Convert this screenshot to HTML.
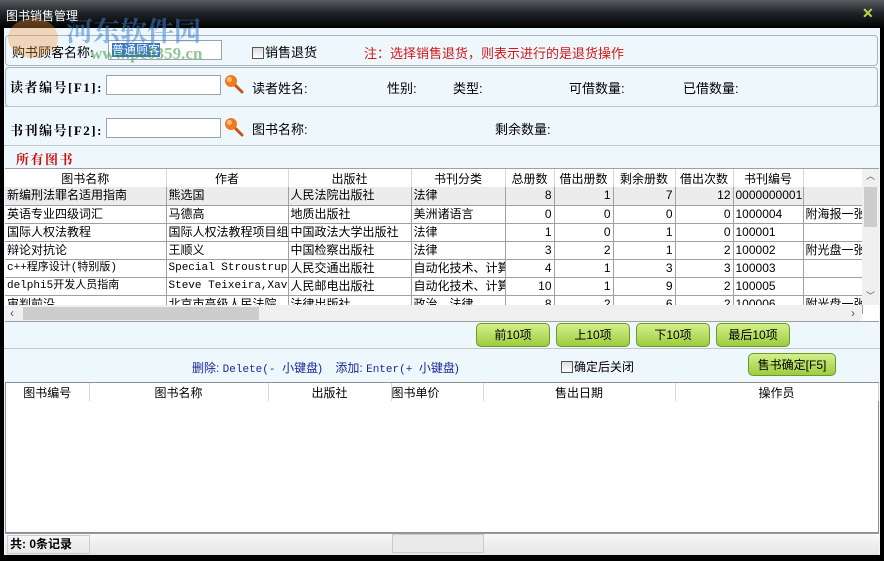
<!DOCTYPE html>
<html><head><meta charset="utf-8"><style>
*{margin:0;padding:0;box-sizing:border-box}
body{width:884px;height:561px;background:#000;font-family:"Liberation Sans","Noto Sans CJK SC",sans-serif;font-size:12px;color:#000;position:relative;overflow:hidden}
.a{position:absolute;white-space:nowrap}
#win{position:absolute;left:4px;top:28px;width:876px;height:527px;background:#eef7fc}
.title{left:0;top:0;width:884px;height:28px;background:linear-gradient(#5a5e62,#22262a 45%,#000)}
.panel{position:absolute;border:1px solid #a9b4bd;border-radius:4px}
.inp{position:absolute;background:#fff;border:1px solid #9aa4ad;height:20px}
.mag{position:absolute;width:22px;height:22px}
.lbl{font-size:13px}
.hdr{font-family:"Liberation Serif","Noto Serif CJK SC",serif;font-size:13px;letter-spacing:1.5px;font-weight:bold}
table{border-collapse:collapse;position:absolute;table-layout:fixed}
td{border-right:1px solid #a0a0a0;border-bottom:1px solid #a0a0a0;height:18px;padding:0 2px;overflow:hidden;white-space:nowrap;font-size:12px;line-height:17px}
th{font-weight:normal;border-right:1px solid #d8d8d8;height:18px;font-size:12px;background:#fff}
.r{text-align:right}
.m{font-family:"Liberation Mono","Noto Sans CJK SC",monospace;font-size:11px}
.btn{position:absolute;height:24px;border:1px solid #6a9a2a;border-radius:5px;background:linear-gradient(#d4f08a,#9ccc3e);text-align:center;line-height:22px;font-size:12px}
.cb{display:inline-block;width:12px;height:12px;border:1px solid #555;background:linear-gradient(#ddd,#fff);vertical-align:-2px;margin-right:1px}
</style></head><body>
<div class="a title"></div>
<div class="a" style="left:6px;top:7px;color:#fff;font-size:12px">图书销售管理</div>
<div class="a" style="left:862px;top:5px;color:#b8d84a;font-weight:bold;font-size:14px">✕</div>
<div id="win">
 <div class="panel" style="left:1px;top:7px;width:873px;height:31px"></div>
 <div class="panel" style="left:1px;top:39px;width:873px;height:40px"></div>
 <div class="a" style="left:0;top:78px;width:876px;border-top:1px solid #c0c8ce"></div>
 <div class="a" style="left:0;top:117px;width:876px;border-top:1px solid #c0c8ce"></div>
 <div class="a lbl" style="left:8px;top:14px">购书顾客名称:</div>
 <div class="inp" style="left:104px;top:12px;width:114px"><span style="background:#3a78c8;color:#fff;margin-left:3px;font-size:12px">普通顾客</span></div>
 <div class="a lbl" style="left:248px;top:14px"><span class="cb"></span>销售退货</div>
 <div class="a lbl" style="left:360px;top:15px;color:#d01818">注：选择销售退货，则表示进行的是退货操作</div>
 <div class="a hdr" style="left:6px;top:49px">读者编号[F1]:</div>
 <div class="inp" style="left:102px;top:47px;width:115px"></div>
 <svg class="mag" style="left:219px;top:45px" viewBox="0 0 22 22"><line x1="10" y1="10" x2="19" y2="19" stroke="#c0561a" stroke-width="3" stroke-linecap="round"/><circle cx="8" cy="8" r="6" fill="#f07a20"/><circle cx="6.5" cy="6.5" r="2.5" fill="#fbc08a"/></svg>
 <div class="a lbl" style="left:248px;top:50px">读者姓名:</div>
 <div class="a lbl" style="left:383px;top:50px">性别:</div>
 <div class="a lbl" style="left:449px;top:50px">类型:</div>
 <div class="a lbl" style="left:565px;top:50px">可借数量:</div>
 <div class="a lbl" style="left:679px;top:50px">已借数量:</div>
 <div class="a hdr" style="left:6px;top:92px">书刊编号[F2]:</div>
 <div class="inp" style="left:102px;top:90px;width:115px"></div>
 <svg class="mag" style="left:219px;top:88px" viewBox="0 0 22 22"><line x1="10" y1="10" x2="19" y2="19" stroke="#c0561a" stroke-width="3" stroke-linecap="round"/><circle cx="8" cy="8" r="6" fill="#f07a20"/><circle cx="6.5" cy="6.5" r="2.5" fill="#fbc08a"/></svg>
 <div class="a lbl" style="left:248px;top:91px">图书名称:</div>
 <div class="a lbl" style="left:491px;top:91px">剩余数量:</div>
 <div class="a hdr" style="left:12px;top:121px;color:#c81010;font-size:13px">所有图书</div>
 <div class="a" style="left:1px;top:140px;width:874px;height:154px;background:#fff;border-top:1px solid #a0a0a0;border-bottom:1px solid #a0a0a0;overflow:hidden">
 <table style="left:0;top:0;width:857px">
 <colgroup><col style="width:161px"><col style="width:122px"><col style="width:123px"><col style="width:94px"><col style="width:49px"><col style="width:59px"><col style="width:62px"><col style="width:58px"><col style="width:70px"><col style="width:59px"></colgroup>
 <tr><th>图书名称</th><th>作者</th><th>出版社</th><th>书刊分类</th><th>总册数</th><th>借出册数</th><th>剩余册数</th><th>借出次数</th><th>书刊编号</th><th></th></tr>
 <tr style="background:#ececec"><td>新编刑法罪名适用指南</td><td>熊选国</td><td>人民法院出版社</td><td>法律</td><td class="r">8</td><td class="r">1</td><td class="r">7</td><td class="r">12</td><td>0000000001</td><td></td></tr>
 <tr><td>英语专业四级词汇</td><td>马德高</td><td>地质出版社</td><td>美洲诸语言</td><td class="r">0</td><td class="r">0</td><td class="r">0</td><td class="r">0</td><td>1000004</td><td>附海报一张</td></tr>
 <tr><td>国际人权法教程</td><td>国际人权法教程项目组</td><td>中国政法大学出版社</td><td>法律</td><td class="r">1</td><td class="r">0</td><td class="r">1</td><td class="r">0</td><td>100001</td><td></td></tr>
 <tr><td>辩论对抗论</td><td>王顺义</td><td>中国检察出版社</td><td>法律</td><td class="r">3</td><td class="r">2</td><td class="r">1</td><td class="r">2</td><td>100002</td><td>附光盘一张</td></tr>
 <tr><td class="m">c++程序设计(特别版)</td><td class="m">Special Stroustrup</td><td>人民交通出版社</td><td>自动化技术、计算</td><td class="r">4</td><td class="r">1</td><td class="r">3</td><td class="r">3</td><td>100003</td><td></td></tr>
 <tr><td class="m">delphi5开发人员指南</td><td class="m">Steve Teixeira,Xavier</td><td>人民邮电出版社</td><td>自动化技术、计算</td><td class="r">10</td><td class="r">1</td><td class="r">9</td><td class="r">2</td><td>100005</td><td></td></tr>
 <tr><td>审判前沿</td><td>北京市高级人民法院</td><td>法律出版社</td><td>政治、法律</td><td class="r">8</td><td class="r">2</td><td class="r">6</td><td class="r">2</td><td>100006</td><td>附光盘一张</td></tr>
 </table>
 <div class="a" style="left:857px;top:0;width:17px;height:136px;background:#f0f0f0"><div class="a" style="left:2px;top:18px;width:13px;height:40px;background:#cdcdcd"></div><div class="a" style="left:4px;top:0;font-size:9px;color:#555">︿</div><div class="a" style="left:4px;top:120px;font-size:9px;color:#555">﹀</div></div>
 <div class="a" style="left:0;top:136px;width:857px;height:17px;background:#f0f0f0"><div class="a" style="left:18px;top:2px;width:236px;height:13px;background:#cdcdcd"></div><div class="a" style="left:5px;top:1px;color:#555">‹</div><div class="a" style="left:846px;top:1px;color:#555">›</div></div>
 </div>
 <div class="btn" style="left:472px;top:295px;width:74px">前10项</div>
 <div class="btn" style="left:552px;top:295px;width:74px">上10项</div>
 <div class="btn" style="left:632px;top:295px;width:74px">下10项</div>
 <div class="btn" style="left:712px;top:295px;width:74px">最后10项</div>
 <div class="a" style="left:0;top:320px;width:876px;border-top:1px solid #c0c8ce"></div>
 <div class="a" style="left:188px;top:331px;color:#1a2a9a;font-size:12px">删除: <span class="m">Delete(- </span>小键盘)&nbsp;&nbsp;&nbsp; 添加: <span class="m">Enter(+ </span>小键盘)</div>
 <div class="a lbl" style="left:557px;top:330px;font-size:12px"><span class="cb"></span>确定后关闭</div>
 <div class="btn" style="left:744px;top:325px;width:88px;height:23px">售书确定[F5]</div>
 <div class="a" style="left:1px;top:354px;width:874px;height:151px;background:#fff;border:1px solid #909090">
 <table style="left:0;top:0;width:872px">
 <colgroup><col style="width:83px"><col style="width:179px"><col style="width:123px"><col style="width:92px"><col style="width:192px"><col style="width:203px"></colgroup>
 <tr><th>图书编号</th><th>图书名称</th><th>出版社</th><th style="text-align:left">图书单价</th><th>售出日期</th><th>操作员</th></tr>
 </table></div>
 <div class="a" style="left:1px;top:505px;width:874px;height:22px;background:linear-gradient(#f8f8f8,#e6e6e6);border-top:1px solid #999"></div>
 <div class="a" style="left:3px;top:507px;width:83px;height:19px;border:1px solid #ccc;font-weight:bold;line-height:17px;padding-left:2px">共: 0条记录</div>
 <div class="a" style="left:388px;top:506px;width:92px;height:19px;border:1px solid #ccc;background:#e8eaec"></div>
</div>
<div class="a" style="left:66px;top:10px;font-size:27px;font-weight:bold;color:rgba(60,130,210,0.55);font-family:'Noto Serif CJK SC',serif">河东软件园</div>
<div class="a" style="left:90px;top:44px;font-size:17px;font-weight:bold;color:rgba(60,150,60,0.55);font-family:'Liberation Serif',serif">www.pc0359.cn</div>
<div class="a" style="left:8px;top:18px;width:50px;height:40px;border-radius:50%;background:rgba(240,150,60,0.35)"></div>
</body></html>
